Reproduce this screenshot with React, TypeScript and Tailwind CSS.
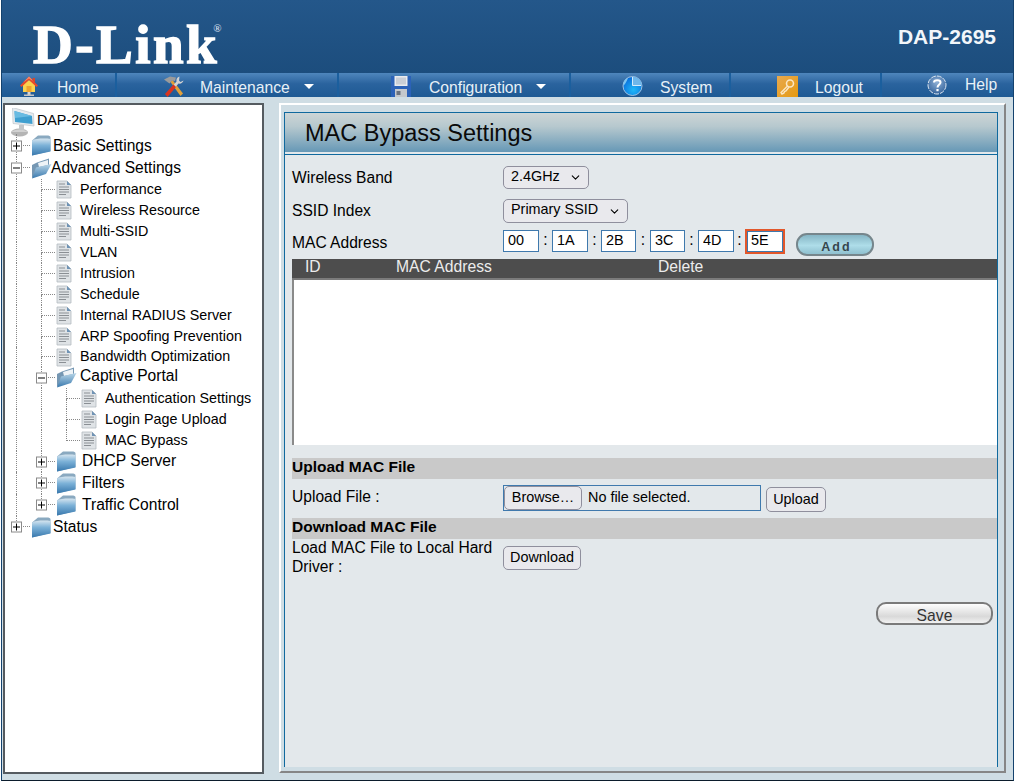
import { ChevronDown } from "lucide-react";

const FONT = "font-['Liberation_Sans',Arial,sans-serif]";

function HomeIcon() {
  return (
    <svg width="18" height="21" viewBox="0 0 18 21" className="shrink-0">
      <rect x="7.500" y="16" width="3" height="3" fill="#d5d5d5" />
      <rect x="4" y="18.500" width="10" height="1.500" fill="#c4c4c4" />
      <path d="M3 8.500 9 4l6 4.500V16H3z" fill="#fbd24e" />
      <path d="M6.500 10h5v6h-5z" fill="#f0a42e" />
      <path d="M0 9.500 9 .5l9 9-1.500 1.500L9 4 1.500 11z" fill="#e8482b" />
      <path d="M9 .5 3 6.500 9 2.500l6 4z" fill="#f58a6a" />
      <path d="M12.500 2H15v5l-2.500-2.500z" fill="#d8452a" />
    </svg>
  );
}

function ToolsIcon() {
  return (
    <svg width="20" height="21" viewBox="0 0 20 21" className="shrink-0">
      <path d="M6.500 6 8.500 4 19 17.500 16.500 20z" fill="#e0a03a" />
      <path d="M0 3.500 6 .5l6 1-1 3.500-3-.5-2.500 3z" fill="#9b9b9b" />
      <path d="M15.500.5c-2.500.5-3.500 3-3 5L9.500 9l2 2 3-3.500c2 .5 4.500-.5 5-3l-3 1.500-1.500-1.500z" fill="#d2d2d2" />
      <path d="M9.500 8.500 1 18l2.500 3 8.500-10z" fill="#d9341f" />
    </svg>
  );
}

function FloppyIcon() {
  return (
    <svg width="20" height="21" viewBox="0 0 20 21" className="shrink-0">
      <rect width="20" height="21" fill="#2b62b8" />
      <rect x="3.500" y="0" width="13" height="10" fill="#e9ebee" />
      <rect x="5" y="1.500" width="10" height="7" fill="#c9ced6" />
      <rect x="4" y="13" width="12" height="8" fill="#c4c8cc" />
      <rect x="5.500" y="15" width="4" height="4" fill="#6a7380" />
    </svg>
  );
}

function SystemIcon() {
  return (
    <svg width="21" height="20" viewBox="0 0 21 20" className="shrink-0">
      <defs>
        <radialGradient id="sys" cx="0.55" cy="0.7" r="0.65">
          <stop offset="0" stopColor="#1fb8f8" />
          <stop offset="1" stopColor="#0a6fdc" />
        </radialGradient>
      </defs>
      <circle cx="10.500" cy="10" r="9.500" fill="url(#sys)" stroke="#bcd3ea" strokeWidth="0.8" />
      <path d="M10.500 9.500V.5A9.500 9.500 0 0 1 20 9.500z" fill="#6fb7ea" />
      <path d="M4 3C2 4.500 1 7 1.500 9.500 3.500 8 4.500 5.500 6 2z" fill="#7cc4f0" />
      <path d="M10.500 1v8.500H19" fill="none" stroke="#d4ecfb" strokeWidth="1" />
    </svg>
  );
}

function KeyIcon() {
  return (
    <svg width="21" height="21" viewBox="0 0 21 21" className="shrink-0">
      <defs>
        <linearGradient id="key" x1="0" y1="0" x2="1" y2="1">
          <stop offset="0" stopColor="#e8a94f" />
          <stop offset="1" stopColor="#e59a10" />
        </linearGradient>
      </defs>
      <rect width="21" height="21" fill="url(#key)" />
      <circle cx="13" cy="7.500" r="3.500" fill="none" stroke="#fbe6c2" strokeWidth="1.600" />
      <path d="M10.500 10 4 16.500l1 1.500 2-1 .5-1.500 1.500-.5 3-4" fill="none" stroke="#fbe6c2" strokeWidth="1.400" />
    </svg>
  );
}

function HelpIcon() {
  return (
    <svg width="20" height="20" viewBox="0 0 20 20" className="shrink-0 -mt-[3px]">
      <defs>
        <radialGradient id="help" cx="0.5" cy="0.35" r="0.7">
          <stop offset="0" stopColor="#8fb0d6" />
          <stop offset="1" stopColor="#2f5f98" />
        </radialGradient>
      </defs>
      <circle cx="10" cy="10" r="9" fill="url(#help)" stroke="#dfe8f2" strokeWidth="1" strokeDasharray="5 1" />
      <path d="M7 7.500C7 4.500 13.500 4.500 13.500 7.500 13.500 9.500 10.500 9.500 10.500 12.500" fill="none" stroke="#fff" strokeWidth="2" />
      <rect x="9.400" y="14" width="2.200" height="2.200" fill="#fff" />
    </svg>
  );
}

function MonitorIcon() {
  return (
    <svg width="24" height="30" viewBox="0 0 24 30" className="shrink-0">
      <ellipse cx="8.500" cy="24.500" rx="8.500" ry="4" fill="#b5b5b5" />
      <path d="M0.500 24c2-3.500 14-3.500 16 0z" fill="#d2d2d2" />
      <path d="M8 17h5v5H8z" fill="#c2c6c9" />
      <path d="M1.500 -.5 22.500 5.500 23 18 2 15.500z" fill="#e6ebef" stroke="#b6bec5" strokeWidth="0.6" />
      <path d="M3.500 3 21 8 21.500 16 4 14z" fill="#3f9fd0" />
      <path d="M3.500 3 21 8 4 10z" fill="#69bbe2" />
    </svg>
  );
}

function FolderClosed({ id }: { id: string }) {
  return (
    <svg width="20" height="21" viewBox="0 0 20 21" className="shrink-0">
      <defs>
        <linearGradient id={id} x1="0" y1="0" x2="0" y2="1">
          <stop offset="0" stopColor="#d6e5ef" />
          <stop offset="0.4" stopColor="#7db2d8" />
          <stop offset="1" stopColor="#3878ad" />
        </linearGradient>
      </defs>
      <path d="M7 .5h9c2 0 3.500.5 3.500 2V16L1 20.500V5.500z" fill="#8aa9c0" />
      <path d="M1 5.500C4 3.500 14 3 19.500 4V16.500L1 20.500z" fill={`url(#${id})`} />
    </svg>
  );
}

function FolderOpen({ id }: { id: string }) {
  return (
    <svg width="21" height="21" viewBox="0 0 21 21" className="shrink-0">
      <defs>
        <linearGradient id={id} x1="0" y1="0" x2="0" y2="1">
          <stop offset="0" stopColor="#b9d6e8" />
          <stop offset="1" stopColor="#3878ad" />
        </linearGradient>
      </defs>
      <path d="M1 20V7l5-2.500 12-4v6z" fill="#7597b3" />
      <path d="M7 5 17 2v5L8 9z" fill="#eef3f7" />
      <path d="M5 9.500 20.500 6 15 16 1 20.500z" fill={`url(#${id})`} />
    </svg>
  );
}

function DocIcon() {
  return (
    <svg width="16" height="19" viewBox="0 0 16 19" className="shrink-0">
      <path d="M1 1h10l4 4v13H1z" fill="#dfe3e6" stroke="#b4bbc0" strokeWidth="0.8" />
      <path d="M11 1l4 4h-4z" fill="#6f93b5" />
      <path d="M3 4h6M3 7h10M3 9.500h10M3 12h10M3 14.500h7" stroke="#8a8f94" strokeWidth="1" />
    </svg>
  );
}

function Plus() {
  return (
    <div className="w-[11px] h-[11px] shrink-0 border border-[#8a8a8a] bg-white flex items-center justify-center">
      <div className="w-[7px] h-[7px] bg-[linear-gradient(#000,#000),linear-gradient(#000,#000)] bg-[length:7px_1px,1px_7px] bg-center bg-no-repeat" />
    </div>
  );
}

function Minus() {
  return (
    <div className="w-[11px] h-[11px] shrink-0 border border-[#8a8a8a] bg-white flex items-center justify-center">
      <div className="w-[7px] h-px bg-black" />
    </div>
  );
}

// one level of indent with a dotted guide running through it
function Guide() {
  return (
    <div className="w-[25px] shrink-0 h-full pl-[11px]">
      <div className="h-full border-l border-dotted border-[#888]" />
    </div>
  );
}

// the elbow in front of a leaf or folder, last stops the line at the row middle
function Elbow({ last = false, box }: { last?: boolean; box?: "plus" | "minus" }) {
  return (
    <div className="w-[25px] shrink-0 h-full pl-[11px] flex flex-col relative">
      <div className="h-1/2 w-[14px] border-l border-b border-dotted border-[#888]" />
      {!last && <div className="h-1/2 border-l border-dotted border-[#888]" />}
      {box && (
        <div className="absolute left-[6px] top-1/2 -translate-y-1/2">
          {box === "plus" ? <Plus /> : <Minus />}
        </div>
      )}
    </div>
  );
}

type RowProps = {
  h: string;
  depth: number;
  last?: boolean;
  box?: "plus" | "minus";
  icon: React.ReactNode;
  iconW: string;
  text: string;
  textClass: string;
};

function Row({ h, depth, last, box, icon, iconW, text, textClass }: RowProps) {
  return (
    <div className={`flex items-center ${h}`}>
      {depth >= 1 && <Guide />}
      {depth >= 2 && <Guide />}
      <Elbow last={last} box={box} />
      <div className={`${iconW} shrink-0 flex pl-px`}>{icon}</div>
      <span className={`${textClass} text-black whitespace-nowrap`}>{text}</span>
    </div>
  );
}

function Tree() {
  const leaf = (text: string, depth: number, h = "h-[21px]", last = false) => (
    <Row
      key={text}
      h={h}
      depth={depth}
      last={last}
      icon={<DocIcon />}
      iconW="w-[25px] pl-[2px]"
      text={text}
      textClass="text-[14.3px]"
    />
  );
  return (
    <div className="pt-[3px]">
      <div className="flex items-start h-[26px]">
        <div className="pl-[6px] w-[32px] shrink-0 h-[26px]">
          <MonitorIcon />
        </div>
        <span className="text-[14.3px] text-black leading-none mt-[5px]">DAP-2695</span>
      </div>
      <Row h="h-[23px]" depth={0} box="plus" icon={<FolderClosed id="f0" />} iconW="w-[23px]" text="Basic Settings" textClass="text-[15.6px]" />
      <Row h="h-[22px]" depth={0} box="minus" icon={<FolderOpen id="f1" />} iconW="w-[21px]" text="Advanced Settings" textClass="text-[15.6px]" />
      {leaf("Performance", 1)}
      {leaf("Wireless Resource", 1)}
      {leaf("Multi-SSID", 1)}
      {leaf("VLAN", 1)}
      {leaf("Intrusion", 1)}
      {leaf("Schedule", 1)}
      {leaf("Internal RADIUS Server", 1)}
      {leaf("ARP Spoofing Prevention", 1)}
      {leaf("Bandwidth Optimization", 1, "h-[20px]")}
      <Row h="h-[21px]" depth={1} box="minus" icon={<FolderOpen id="f2" />} iconW="w-[25px]" text="Captive Portal" textClass="text-[15.6px] -mt-[4px]" />
      {leaf("Authentication Settings", 2)}
      {leaf("Login Page Upload", 2)}
      {leaf("MAC Bypass", 2, "h-[21px]", true)}
      <Row h="h-[21px]" depth={1} box="plus" icon={<FolderClosed id="f3" />} iconW="w-[27px]" text="DHCP Server" textClass="text-[15.6px] -mt-[2px]" />
      <Row h="h-[22px]" depth={1} box="plus" icon={<FolderClosed id="f4" />} iconW="w-[27px]" text="Filters" textClass="text-[15.6px]" />
      <Row h="h-[22px]" depth={1} last box="plus" icon={<FolderClosed id="f5" />} iconW="w-[27px]" text="Traffic Control" textClass="text-[15.6px]" />
      <Row h="h-[22px]" depth={0} last box="plus" icon={<FolderClosed id="f6" />} iconW="w-[23px]" text="Status" textClass="text-[15.6px]" />
    </div>
  );
}

const navItems = [
  { w: "w-[115px]", icon: <HomeIcon />, label: "Home", iconLeft: "pl-[18px]", gap: "ml-[19px]" },
  { w: "w-[222px]", icon: <ToolsIcon />, label: "Maintenance", iconLeft: "pl-[47px]", gap: "ml-[16px]", caret: true },
  { w: "w-[232px]", icon: <FloppyIcon />, label: "Configuration", iconLeft: "pl-[52px]", gap: "ml-[18px]", caret: true },
  { w: "w-[160px]", icon: <SystemIcon />, label: "System", iconLeft: "pl-[51px]", gap: "ml-[17px]" },
  { w: "w-[151px]", icon: <KeyIcon />, label: "Logout", iconLeft: "pl-[46px]", gap: "ml-[17px]" },
  { w: "flex-1", icon: <HelpIcon />, label: "Help", iconLeft: "pl-[45px]", gap: "ml-[18px]", raised: true },
];

function Nav() {
  return (
    <div className="flex h-[24px] bg-[linear-gradient(#4f86bc,#2a639e_45%,#1e5a94)]">
      {navItems.map((n, i) => (
        <div
          key={n.label}
          className={`${n.w} ${n.iconLeft} h-full pt-[2px] flex items-center ${i < 5 ? "border-r-2 border-[#1b5f9e]" : ""}`}
        >
          {n.icon}
          <span className={`${n.gap} text-[15.7px] text-[#e8f1f7] ${n.raised ? "-mt-[3px]" : "mt-[3px]"}`}>{n.label}</span>
          {n.caret && (
            <span className="ml-[14px] mt-px w-0 h-0 border-x-[5px] border-x-transparent border-t-[5px] border-t-white" />
          )}
        </div>
      ))}
    </div>
  );
}

function Select({ label, w, h, gap }: { label: string; w: string; h: string; gap: string }) {
  return (
    <div className={`${w} ${h} border border-[#8f8f9d] rounded-[5px] bg-[#e9e9ed] flex items-center pl-[7px] text-[14.4px] text-black`}>
      <span className="-mt-[2px]">{label}</span>
      <ChevronDown className={`${gap} w-[13px] h-[13px]`} strokeWidth={2} />
    </div>
  );
}

function MacInput({ value, w, focused }: { value: string; w: string; focused?: boolean }) {
  return (
    <input
      readOnly
      value={value}
      className={
        focused
          ? `${w} h-[25px] -mt-[1px] border-2 border-[#e2572b] outline-none pl-[4px] pb-[3px] text-[14.4px] text-black bg-white ring-1 ring-inset ring-[#3f79ad]`
          : `${w} h-[22px] border border-[#3f79ad] outline-none pl-[4px] pb-[3px] text-[14.4px] text-black bg-white`
      }
    />
  );
}

function Sep({ className }: { className: string }) {
  return <span className={`${className} text-center text-[15.7px] text-black leading-[20px]`}>:</span>;
}

function NativeButton({ label, className }: { label: string; className: string }) {
  return (
    <button className={`${className} border border-[#8f8f9d] rounded-[5px] bg-[#e9e9ed] text-[14.4px] text-black flex items-center justify-center`}>
      {label}
    </button>
  );
}

function Section({ title }: { title: string }) {
  return <div className="h-[21px] bg-[#c9c9c9] text-[15.5px] font-bold text-black leading-[17px]">{title}</div>;
}

export default function App() {
  return (
    <div className={`${FONT} w-[1015px] h-[783px] bg-white overflow-hidden`}>
      <div className="ml-px w-[1013px] h-[781px] border-x border-b border-x-[#14426e] border-b-[#0b1c2c] bg-[#cfdde4] flex flex-col">
        <div className="h-[73px] bg-[linear-gradient(#24578a,#1c4d7d)] flex justify-between">
          <div className="pl-[31px] pt-[15px] text-white font-bold font-['Liberation_Serif',serif] text-[55px] leading-[60px] tracking-[2.5px] [-webkit-text-stroke:1.5px_white] flex items-start">
            D-Link
            <span className="text-[11px] leading-none tracking-normal -ml-[6px] mt-[8px] [-webkit-text-stroke:0] text-[#c8d8e6]">®</span>
          </div>
          <div className="pr-[17px] pt-[25px] text-[21px] leading-[24px] font-bold text-[#f2f6fa]">DAP-2695</div>
        </div>
        <Nav />
        <div className="flex gap-[15px] pt-[6px] pl-px">
          <div className="w-[261px] h-[671px] border-2 border-[#555b60] bg-white">
            <Tree />
          </div>
          <div className="w-[727px] h-[670px] border-2 border-t-white border-l-white border-r-[#868686] border-b-[#868686] pl-[3px] pt-[7px] pr-[6px] pb-[4px]">
            <div className="h-full border-x border-t border-[#10699e] bg-[#e3e8eb] flex flex-col">
              <div className="h-[39px] pl-[20px] pt-[2px] flex items-center bg-[linear-gradient(#cdd5d6,#b6c8ce_35%,#6698b6)] text-[23.5px] text-[#0a0a0a]">
                MAC Bypass Settings
              </div>
              <div className="h-[3px] border-b border-[#10699e] bg-[#e3e8eb]" />
              <div className="pl-[7px] flex flex-col">
                <div className="flex items-center mt-[11px] h-[23px]">
                  <div className="w-[211px] text-[15.6px] text-black">Wireless Band</div>
                  <Select label="2.4GHz" w="w-[86px]" h="h-[23px]" gap="ml-[9px]" />
                </div>
                <div className="flex items-center mt-[10px] h-[24px]">
                  <div className="w-[211px] text-[15.6px] text-black">SSID Index</div>
                  <Select label="Primary SSID" w="w-[125px]" h="h-[24px]" gap="ml-[10px]" />
                </div>
                <div className="flex items-start mt-[7px] h-[29px]">
                  <div className="w-[211px] text-[15.6px] leading-[26px] text-black">MAC Address</div>
                  <MacInput value="00" w="w-[36px]" />
                  <Sep className="w-[13px]" />
                  <MacInput value="1A" w="w-[36px]" />
                  <Sep className="w-[13px]" />
                  <MacInput value="2B" w="w-[35px]" />
                  <Sep className="w-[14px]" />
                  <MacInput value="3C" w="w-[35px]" />
                  <Sep className="w-[13px]" />
                  <MacInput value="4D" w="w-[36px]" />
                  <Sep className="w-[11px]" />
                  <MacInput value="5E" w="w-[40px]" focused />
                  <button className="ml-[11px] mt-[3px] w-[78px] h-[23px] pl-[3px] pt-[3px] rounded-[11px] border-2 border-[#76868c] bg-[linear-gradient(#86b6c5,#aedde9_55%,#8fc0cf)] text-[12.500px] font-bold tracking-[2px] text-[#37464c]">
                    Add
                  </button>
                </div>
                <div className="h-[21px] bg-[#4d4d4d] border-b-2 border-[#7b7b7b] flex text-[15.7px] text-[#ececec] leading-[16px]">
                  <div className="w-[104px] pl-[13px]">ID</div>
                  <div className="w-[261px]">MAC Address</div>
                  <div className="pl-px">Delete</div>
                </div>
                <div className="h-[165px] bg-white border-l-2 border-[#8a8a8a]" />
                <div className="mt-[13px]">
                  <Section title="Upload MAC File" />
                </div>
                <div className="flex items-start mt-[6px] h-[33px]">
                  <div className="w-[211px] text-[15.6px] leading-[23px] text-black">Upload File :</div>
                  <div className="w-[258px] h-[26px] border border-[#3f79ad] flex items-center text-[14.4px] text-black">
                    <NativeButton label="Browse…" className="w-[78px] h-[24px]" />
                    <span className="ml-[6px]">No file selected.</span>
                  </div>
                  <NativeButton label="Upload" className="ml-[5px] mt-[2px] w-[60px] h-[25px]" />
                </div>
                <Section title="Download MAC File" />
                <div className="flex items-start">
                  <div className="w-[211px] text-[15.6px] leading-[19px] text-black pr-[4px] -mt-[1px]">
                    Load MAC File to Local Hard Driver :
                  </div>
                  <NativeButton label="Download" className="mt-[7px] w-[78px] h-[24px]" />
                </div>
                <div className="flex justify-end mt-[26px] pr-[4px]">
                  <button className="w-[117px] h-[23px] pb-[2px] rounded-[10px] border-2 border-[#7a7a7a] bg-[linear-gradient(#fdfdfd,#d9d9d9_65%,#f1f1f1)] text-[15.7px] text-[#333]">
                    Save
                  </button>
                </div>
              </div>
            </div>
          </div>
        </div>
      </div>
    </div>
  );
}
